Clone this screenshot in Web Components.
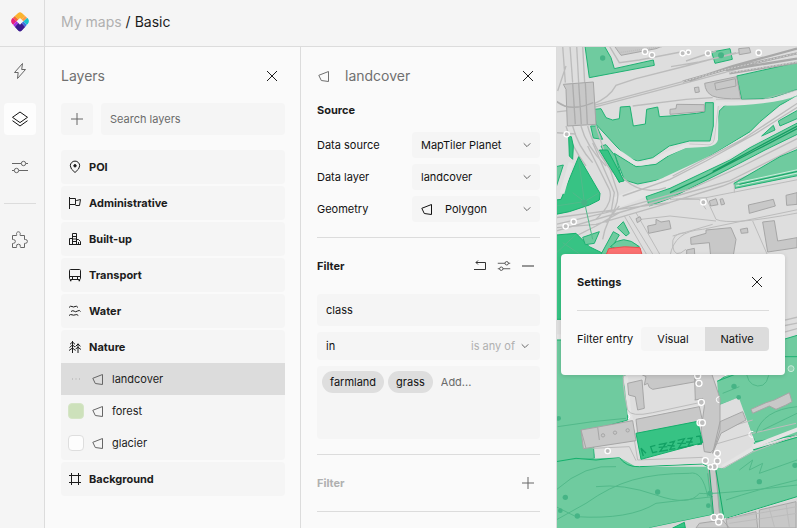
<!DOCTYPE html>
<html lang="en">
<head>
<meta charset="utf-8">
<title>Basic – My maps</title>
<meta name="viewport" content="width=device-width, initial-scale=1">
<style>
html,body{height:100%}
body{margin:0;overflow:hidden;font-family:Inter,"Liberation Sans",sans-serif;font-size:11px;line-height:16px;color:#1c1c1c;background:#fafafa}
</style>
</head>
<body>
<map-app></map-app>
<script>
const define = (name, html, setup) => {
  const t = document.createElement('template');
  t.innerHTML = `<style>*{box-sizing:border-box}button,input,select{font:inherit;color:inherit;border:0;background:none;margin:0;padding:0;border-radius:0}button{display:grid;place-items:center}h1,h2,h3,p,ul{margin:0;padding:0;font:inherit;list-style:none}</style>` + html;
  customElements.define(name, class extends HTMLElement {
    connectedCallback() {
      if (this.shadowRoot) return;
      this.attachShadow({mode: 'open'}).append(t.content.cloneNode(true));
      if (setup) setup(this, this.shadowRoot);
    }
  });
};

const icons = {
  logo: [20, `<clipPath id="c"><path d="M10 .3Q11.300.3 12.300 1.200L17.800 6.200Q20 9 17.800 12L12 18.600Q10 20.600 8 18.600L2.200 12Q0 9 2.200 6.200L7.700 1.200Q8.700.3 10 .3z"/></clipPath><g stroke="none" clip-path="url(#c)"><path fill="#fbb42f" d="M10 -1 15.400 4.100 11.700 7.600 10 5.900 8.300 7.600 4.600 4.100z"/><path fill="#f4683a" d="M4.600 4.100 8.300 7.600 6.600 9.300 2.900 5.700z"/><path fill="#e8207a" d="M2.900 5.700 6.600 9.300 3 12.900-1 9z"/><path fill="#a52be0" d="M6.600 9.300 8.300 11 4.600 15.200 3 12.900z"/><path fill="#3b1a8f" d="M8.300 11 10 12.700 11.700 11 15.500 15.200 10 21 4.600 15.200z"/><path fill="#3f6fe0" d="M11.700 11 13.400 9.300 17 12.900 15.400 15.200z"/><path fill="#16c3cc" d="M13.400 9.300 17.100 5.700 21 9 17 12.900z"/><path fill="#ff9c45" d="M11.700 7.600 15.400 4.100 17.100 5.700 13.400 9.300z"/></g>`],
  bolt: [18, `<path d="M11.500 1.500 3.500 10.500H7.200L6.500 16.500 14.500 7.500H10.700z"/>`],
  layers: [18, `<path d="M9 2 16.500 7.300 9 12.600 1.500 7.300z"/><path d="M1.500 10.700 9 16 16.500 10.700"/>`],
  sliders: [18, `<path d="M1 5.500H10.200M14.800 5.500H17M1 12.500H3.200M7.800 12.500H17"/><circle cx="12.500" cy="5.500" r="2.200"/><circle cx="5.500" cy="12.500" r="2.200"/>`],
  puzzle: [18, `<path d="M1.500 4.500H5.600Q6 3.900 5.600 3.300A1.900 1.900 0 1 1 9.200 3.300Q8.800 3.900 9.200 4.500H13.500V8.500Q14.100 8.900 14.500 8.500A1.800 1.800 0 1 1 14.500 12.300Q14 12 13.500 12.400V16.500H9.600Q9 16 9.300 15.500A1.900 1.900 0 1 0 5.600 15.500Q6 16 5.500 16.500H1.500V12.500Q2 12 2.500 12.300A1.800 1.800 0 1 0 2.500 8.600Q2 9 1.500 8.500z"/>`],
  plus: [14, `<path d="M7 1V13M1 7H13"/>`],
  minus: [14, `<path d="M1 7H13"/>`],
  close: [14, `<path d="M2 2 12 12M12 2 2 12"/>`],
  chevron: [8, `<path d="M.7 2.300 4 5.600 7.300 2.300"/>`],
  polygon: [14, `<path d="M1.800 6.300 11.500 2.500V12.500L4.300 11.500z"/>`],
  back: [14, `<path d="M5 1.500 3 3.500 5 5.500M3 3.500H12.500V10.500H1"/>`],
  pin: [14, `<path d="M7 12.500Q2.300 9 2.300 5.800A4.700 4.700 0 1 1 11.700 5.800Q11.700 9 7 12.500z"/><circle cx="7" cy="5.800" r="1.200" fill="currentColor"/>`],
  flag: [14, `<path d="M1.500 1V13M1.500 2.500H7.500V8.500H1.500M7.500 4.500H8.500L12.500 3.500 11.500 9.500H7.500"/>`],
  building: [14, `<path d="M1.500 12.500V6.500H4.500M1 12.500H13M4.500 12.500V1.500H8.500V12.500M8.500 7.500H10.500L12.500 9.500V12.500M4.500 4.500H8.500M4.500 7H8.500M4.500 9.500H8.500M10.500 10V12.500"/>`],
  bus: [14, `<rect x="1.500" y="1.500" width="11" height="10" rx="1"/><path d="M1.500 8.500H12.500M4.500 8.500V11.500M9.500 8.500V11.500"/><path d="M2.700 11.500V13.200M11.300 11.500V13.200" stroke-width="1.500"/>`],
  water: [14, `<path d="M1 3.500Q2.500 1.500 4 2.500T7 2.500 10 3.500M3 7.500Q5 6 6.200 7.200T9.500 7 12.500 7.500M1 11.500Q2.500 10 4 10.800T7.200 10.800 10.300 11.500"/>`],
  trees: [14, `<path d="M4.500 1V13M4.500 2 2 4.300M4.500 2 7 4.300M4.500 5 1.500 7.500M4.500 5 7 7M4.500 8 1 10.500M4.500 8 7.500 10.500M10 3.500V13M10 4 7.500 6.500M10 4 12.500 6.300M10 7.300 7.500 9M10 7.300 13 9.500"/>`],
  frame: [14, `<path d="M3.500 1V13M10.500 1V13M1 3.500H13M1 10.500H13"/>`],
  dots: [10, `<path d="M1 5H2M4.500 5H5.500M8 5H9"/>`]
};
define('app-icon', `<style>:host{display:block;flex:none}svg{display:block;fill:none;stroke:currentColor}</style>`, (el, root) => {
  const [box, art] = icons[el.getAttribute('name')];
  const s = el.getAttribute('size') || box;
  root.append(document.createRange().createContextualFragment(`<svg aria-hidden="true" width="${s}" height="${s}" viewBox="0 0 ${box} ${box}">${art}</svg>`));
});

define('tool-rail', `<style>
:host{display:block;background:#f5f5f5;color:#666;padding:8px 8px 8px 4px}
nav{display:flex;flex-direction:column;gap:16px;align-items:center}
button{width:32px;height:32px;border-radius:4px}
.on{background:#fdfdfd;color:#111}
hr{width:100%;border:0;border-top:1px solid #dcdcdc;margin:4px 0}
</style><nav aria-label="Tools">
<button aria-label="Quick styles"><app-icon name="bolt"></app-icon></button>
<button class="on" aria-label="Layers"><app-icon name="layers"></app-icon></button>
<button aria-label="Settings"><app-icon name="sliders"></app-icon></button>
<hr><button aria-label="Extensions"><app-icon name="puzzle"></app-icon></button></nav>`);

define('panel-head', `<style>
:host{display:flex;align-items:center;height:32px;padding-right:3px;color:#707070;font-size:14px;gap:14px}
h2{flex:1}button{width:18px;height:18px;color:#1c1c1c}
</style><slot name="icon"></slot><h2><slot></slot></h2><button aria-label="Close"><app-icon name="close"></app-icon></button>`);

define('layer-group', `<style>
:host{display:block;background:#f5f5f5;border-radius:4px;padding:1px 0}
button{display:flex;width:100%;height:32px;align-items:center;gap:7px;padding-left:7px;font-weight:700}
</style><button><span></span></button><slot></slot>`, (el, root) => {
  const icon = document.createElement('app-icon');
  icon.setAttribute('name', el.getAttribute('icon'));
  root.querySelector('button').prepend(icon);
  root.querySelector('span').textContent = el.getAttribute('label');
});

define('layer-item', `<style>
:host{display:block}
button{display:flex;width:100%;height:32px;align-items:center;padding-left:7px;gap:7px}
:host([selected]) button{background:#dcdcdc}
i{width:16px;height:16px;border-radius:4px;background:var(--swatch,none);border:1px solid var(--edge,transparent);display:grid;place-items:center}
app-icon{color:#666}i app-icon{color:#aaa}
</style><button><i></i><app-icon name="polygon"></app-icon><span><slot></slot></span></button>`, (el, root) => {
  if (el.hasAttribute('selected')) root.querySelector('i').innerHTML = '<app-icon name="dots"></app-icon>';
});

define('layers-panel', `<style>
:host{display:block;padding:13px 15px 16px 16px;background:#fafafa}
panel-head{padding-right:4px}
.find{display:grid;grid-template-columns:32px 1fr;gap:8px;margin:11px 0 15px}
.find button,.find input{height:32px;background:#f5f5f5;border-radius:4px}
.find button{color:#666}
.find input{width:100%;padding:0 9px}
input::placeholder{color:#6b6b6b;opacity:1}
.list{display:grid;gap:2px}
</style><panel-head>Layers</panel-head>
<div class="find"><button aria-label="Add layer"><app-icon name="plus"></app-icon></button><input type="search" aria-label="Search layers" placeholder="Search layers"></div>
<div class="list">
<layer-group icon="pin" label="POI"></layer-group>
<layer-group icon="flag" label="Administrative"></layer-group>
<layer-group icon="building" label="Built-up"></layer-group>
<layer-group icon="bus" label="Transport"></layer-group>
<layer-group icon="water" label="Water"></layer-group>
<layer-group icon="trees" label="Nature">
<layer-item selected>landcover</layer-item>
<layer-item style="--swatch:#cde1bb;--edge:#d5e5c6">forest</layer-item>
<layer-item style="--swatch:#fdfdfd;--edge:#dedede">glacier</layer-item>
</layer-group>
<layer-group icon="frame" label="Background"></layer-group>
</div>`);

define('field-select', `<style>
:host{display:grid;grid-template-columns:95px 1fr;align-items:center;color:#111}
.box{display:grid;align-items:center;background:#f5f5f5;border-radius:4px}
.box>*{grid-area:1/1}
select{appearance:none;width:100%;height:26px;padding:0 24px 0 9px}
app-icon{pointer-events:none}
.chev{justify-self:end;margin-right:9px;color:#666}
.shape{margin-left:8px}
:host([icon]) select{padding-left:33px}
</style><label for="s"></label><div class="box"><select id="s"><option></option></select><app-icon class="chev" name="chevron"></app-icon></div>`, (el, root) => {
  root.querySelector('label').textContent = el.getAttribute('label');
  root.querySelector('option').textContent = el.getAttribute('value');
  if (el.hasAttribute('icon')) root.querySelector('.box').insertAdjacentHTML('beforeend', '<app-icon class="shape" name="polygon"></app-icon>');
});

define('value-chip', `<style>:host{display:block}button{height:22px;padding:0 8px;border-radius:11px;background:#dedede;color:#111}</style><button><slot></slot></button>`);

define('detail-panel', `<style>
:host{display:block;padding:13px 16px 16px;background:#fafafa}
h3{font-weight:700}
.fields{display:grid;gap:6px;margin:14px 0 15px}
hr{border:0;border-top:1px solid #dcdcdc;margin:0}
.bar{display:flex;align-items:center;height:56px;gap:10px;padding-right:5px}
.bar h3{flex:1}
.bar button{width:14px;height:18px;color:#333}
.rule{display:grid;gap:6px;margin-bottom:15px;color:#111}
.rule input{width:100%}
.name{height:32px;background:#f5f5f5;border-radius:4px;padding:0 9px}
.op{display:grid;align-items:center;background:#f5f5f5;border-radius:4px}
.op>*{grid-area:1/1}
.op select{appearance:none;height:28px;width:100%;padding:0 80px 0 9px}
.hint{justify-self:end;display:flex;align-items:center;gap:6px;margin-right:11px;color:#b0b0b0;pointer-events:none}
.hint app-icon{color:#666}
.chips{display:flex;flex-wrap:wrap;align-content:flex-start;align-items:center;gap:4px;background:#f5f5f5;border-radius:4px;padding:5px;min-height:73px}
.chips input{flex:1;width:60px;height:22px;padding:0 4px}
.chips input::placeholder{color:#6b6b6b;opacity:1}
.off{color:#b0b0b0}
.off button{color:#666}
.top{padding-top:10px}
</style>
<panel-head><app-icon slot="icon" name="polygon"></app-icon>landcover</panel-head>
<h3 class="top">Source</h3>
<div class="fields">
<field-select label="Data source" value="MapTiler Planet"></field-select>
<field-select label="Data layer" value="landcover"></field-select>
<field-select label="Geometry" value="Polygon" icon></field-select>
</div><hr>
<div class="bar"><h3>Filter</h3><button aria-label="Reset filter"><app-icon name="back"></app-icon></button><button aria-label="Filter settings"><app-icon name="sliders" size="14"></app-icon></button><button aria-label="Remove filter"><app-icon name="minus"></app-icon></button></div>
<div class="rule">
<input class="name" aria-label="Property" value="class">
<div class="op"><select aria-label="Operator"><option>in</option></select><span class="hint">is any of <app-icon name="chevron"></app-icon></span></div>
<div class="chips"><value-chip>farmland</value-chip><value-chip>grass</value-chip><input aria-label="Add value" placeholder="Add..."></div>
</div><hr>
<div class="bar off"><h3>Filter</h3><button aria-label="Add filter"><app-icon name="plus"></app-icon></button></div><hr>`);

define('settings-dialog', `<style>
:host{display:block;background:#fafafa;border-radius:4px;padding:12px 16px 24px;box-shadow:0 1px 4px #0002}
header{display:flex;align-items:center;justify-content:space-between;height:32px;padding-right:5px}
h3{font-weight:700}
header button{width:14px;height:18px}
hr{border:0;border-top:1px solid #dcdcdc;margin:12px 0 16px}
.row{display:flex;align-items:center;justify-content:space-between;color:#111}
.seg{display:grid;grid-template-columns:64px 64px;border-radius:4px;overflow:hidden;background:#f5f5f5}
.seg button{height:24px}
.seg [aria-pressed=true]{background:#dcdcdc}
</style><header><h3>Settings</h3><button aria-label="Close settings"><app-icon name="close"></app-icon></button></header><hr>
<div class="row"><span id="l">Filter entry</span><div class="seg" role="group" aria-labelledby="l"><button aria-pressed="false">Visual</button><button aria-pressed="true">Native</button></div></div>`);

define('map-canvas', `<style>
:host{display:block;overflow:hidden;background:#dedede}
svg{display:block;width:100%;height:100%}
.g{fill:#6fcb9f;stroke:#1fb273;stroke-width:3}
.d{fill:#37c384;stroke:#14b06c;stroke-width:3}
.b{fill:#c8c8c8;stroke:#a6a6a6;stroke-width:3}
.l{fill:none;stroke:#bcbcbc;stroke-width:4}
.w{fill:none;stroke:#e4e4e4}
.t{fill:none;stroke:#52b98a;stroke-width:3}
.c{fill:#bebebe;stroke:#fff;stroke-width:4}
.p{fill:#46b486;stroke:none}
</style>
<svg viewBox="3 3 720 1443" preserveAspectRatio="xMinYMin slice" role="img" aria-label="Map of landcover areas">
<rect width="730" height="1450" fill="#dedede"/>
<!-- parks north of the junction -->
<path class="g" d="M87 0 100 95 295 58 292 42 175 68 165 35 145 0z"/>
<path class="g" d="M115 190 135 188 150 215 170 222 190 218 193 183 222 181 232 240 268 234 272 190 305 183 310 212 342 210 422 202 446 198 448 170 472 170 472 240 462 285 400 285 340 300 290 335 245 345 215 335 180 300 120 235z"/>
<path class="g" d="M175 322 205 402 245 414 330 397 442 342 492 312 582 257 612 227 672 177 730 147 640 166 507 178 490 195 478 280 460 300 400 300 340 328 300 355 240 362z"/>
<path class="g" d="M542 90 730 48V128L642 157 557 160zM467 18 522 8 529 40 477 52z"/>
<path class="g" d="M104 240 122 240 140 280 112 276zM135 300 150 296 178 330 198 400 190 410 165 360z"/>
<path class="l" d="M20 0 28 110M42 0 50 110M62 0 68 110M80 0 86 110M5 135 30 60M30 240Q45 300 90 360M50 240Q65 300 110 350M75 240Q90 300 150 360M95 240Q110 300 170 380"/>
<path class="l" d="M0 165 30 182 110 175Q160 155 180 118L240 98 390 60 540 20M0 198 110 185 280 140 430 100 560 65M113 178 380 107M160 0 190 50 250 42 390 15M390 45 480 15M230 180 390 160 470 155M0 260 60 264M345 62 430 48 550 20"/>
<path class="b" d="M175 0 195 28 300 8 320 0z"/>
<path class="l" stroke-dasharray="3 3" d="M190 20 330 0"/>
<path class="b" d="M22 115 112 108 120 235 34 240 30 130z"/>
<path d="M50 112 58 235M68 111 76 235M88 110 94 235M0 165Q40 200 112 170" fill="none" stroke="#adadad" stroke-width="4"/>
<path d="M380 107 510 70 723 22M510 72 723 38M520 82 723 50M400 104 530 60 723 8" fill="none" stroke="#a8a8a8" stroke-width="7"/>
<path d="M380 107 510 70 723 22M510 82 723 48" fill="none" stroke="#e0e0e0" stroke-width="2" stroke-dasharray="6 4"/>
<path class="b" d="M446 112 542 92 554 158Q495 160 470 150 448 140 446 112zM476 112 538 98 540 120 480 132zM342 190 360 188 362 175 445 176 445 196 342 205zM415 125 428 123 430 138 418 140zM548 8 580 5 584 20 550 26z"/>
<path class="w" stroke-width="12" d="M478 172Q540 176 620 166T730 138M482 175 480 280Q478 292 455 296L390 300 330 325Q270 362 235 350L180 312"/>
<path class="l" style="stroke-width:2" d="M480 160H620L730 130M487 180 475 280Q470 300 450 296L400 294"/>
<!-- railway corridor -->
<path class="w" stroke-width="34" d="M730 165Q660 205 600 270L470 345 330 410 180 470"/>
<path class="g" fill="#5cc795" d="M270 452 342 427 522 342 582 305 730 228V262L627 312 522 367 342 457 280 480z"/>
<path class="t" style="stroke:#169c62;stroke-width:4" d="M342 440 450 390 600 312 730 245M470 377 600 306 730 237"/>
<path class="g" d="M667 225 730 190V215L672 240zM617 270 652 238 657 252z"/>
<path class="l" d="M730 180 600 262 450 345 342 400 200 450M730 168 560 280 350 390M730 275 560 360 400 430 150 500 0 535M730 300 520 405 360 450 0 555M730 325 500 420 340 470 0 515M0 545 120 535 342 470M0 600 120 540 190 500M190 480Q150 520 140 580M120 240 185 440Q190 480 150 530M95 300 160 430Q175 470 120 520M110 290 175 440 165 500M135 330 205 400Q260 450 330 425"/>
<path class="g" d="M730 308 672 332 534 412 537 427 730 388z"/>
<path d="M540 420 730 380M545 410 730 370" fill="none" stroke="#dff3e8" stroke-width="2.500"/>
<path d="M550 415 730 375" fill="none" stroke="#10a565" stroke-width="3"/>
<!-- western parks -->
<path class="d" d="M68 332 132 442 130 462 100 477 40 497 0 505V462L15 460zM0 567 60 562 100 602 145 624V820H0zM38 272H46L52 300 50 340 40 330zM130 312H155L204 405 190 408z"/>
<path class="g" d="M0 362 22 357 0 425zM80 574 130 557 115 592 88 596zM172 557 190 567 155 625H135zM184 545 202 527 220 562 210 570z"/>
<path class="w" stroke-width="14" d="M45 350 18 442"/><path class="t" d="M68 340 85 467 110 580M0 480 85 467 130 440M50 440 85 467M0 622 60 565M20 590 80 630"/>
<circle class="p" cx="85" cy="470" r="9"/><circle class="p" cx="140" cy="36" r="8"/><circle class="p" cx="495" cy="28" r="9"/>
<path class="g" d="M163 602Q200 560 250 602L205 614z"/>
<path d="M158 608Q205 598 252 605L262 640H145z" fill="#fa7070" stroke="#e94f4f" stroke-width="3"/>
<!-- eastern blocks -->
<path class="l" style="stroke-width:3" d="M205 510 280 640M220 510 300 640M240 500 320 640M342 460 450 455 480 520Q520 540 730 500M450 455 730 400M255 520 342 510 480 525M350 570 470 535M342 630Q355 555 440 550L730 490M590 525 640 640M535 415V440M390 560Q345 560 350 600T390 610M360 460H430L450 490"/>
<path class="b" d="M275 540 300 535 300 520 315 528 340 524 345 548 278 562zM240 518 252 512 256 522 244 530zM460 465 480 458 486 476 464 480zM492 460 500 458 506 474 496 477zM577 477 652 460 658 480 580 502zM690 448 723 440V475L692 478zM404 575 450 562 450 552 525 545 540 580 530 640H465L460 590 405 595zM553 550 574 546 576 560 556 562zM620 528 655 524 665 585 723 575V605L635 618zM392 612 415 607 417 640H392z"/>
<g class="c"><circle cx="267" cy="17" r="8"/><circle cx="288" cy="27" r="8"/><circle cx="380" cy="22" r="8"/><circle cx="397" cy="19" r="7"/><circle cx="456" cy="22" r="8"/><circle cx="608" cy="20" r="8"/><circle cx="32" cy="265" r="8"/><circle cx="442" cy="469" r="8"/><circle cx="29" cy="541" r="8"/><circle cx="53" cy="527" r="8"/></g>
<!-- southern park and castle quarter -->
<path class="l" d="M680 824 730 812M680 840 730 830M680 860 730 846"/>
<path class="g" d="M0 884H200L215 1100 0 1160zM650 890 730 866V1160L600 1200 480 1010z"/>
<path d="M0 872H40" class="w" stroke-width="14"/>
<g transform="translate(0 972)">
<path class="g" d="M0-90H205L215 150 110 180 115 265 0 275zM480 35 545 10 590-40H730V195L597 215 545 85 492 105z"/>
<path fill="#6fcb9f" d="M0 270 190 262 240 290H460L500 295 590 240 723 200V380L505 445 400 455 280 474H0z"/>
<path class="d" style="fill:none" d="M0 275 60 265 120 270 190 262Q210 292 250 290L440 282 460 292M500 295 590 240 723 202M510 445 723 380M280 474 470 434"/>
<path d="M280 474 470 434 510 446 723 384V480H280z" fill="#d6d6d6"/>
<path fill="#dedede" d="M200 20 240 0H480L490 105 548 82 597 215 500 292 440 280 240 288 190 262 118 265 115 235 230 150z"/>
<path class="w" stroke-width="12" d="M210 20 220 130 235 180M590 230 730 176M500 290 590 236M240 150 430 112"/>
<path class="l" style="stroke-width:3" d="M205 10Q195 30 215 120 225 142 290 128L430 98M225 150 245 270 440 262M110 235 220 230 240 272M470 225 590 190 720 160M495 178 590 150M500 295 590 246 723 195M440 85 415 90"/>
<path class="b" d="M215 40 258 30 265 115 245 120 238 80 218 75zM265 45 275 40 280 52 290 58 420 35 412 5 240 5 270 20zM415 5H465L492 85V180L475 235 465 248 445 245 435 180 445 110 440 85 418 90zM492 155 560 125 570 150 495 190 470 250zM240 148 430 110 440 155 245 190zM75 180 120 172 230 152 240 212 82 236zM75 180 90 235M125 172 130 210M585 118 630 98 655 90 700 68 708 95 690 105 660 118 640 108 590 130zM457 292 478 290 492 450 472 440z"/>
<path class="d" d="M240 190 425 154 440 218 255 268z"/>
<path d="M262 258 255 235 270 250M298 226 284 230 290 248 304 245M308 224 330 220 312 244 336 240M308 232 334 230M340 218 355 214 342 238 358 236M334 226 356 228M365 211 385 206 368 234 392 230M364 220 390 220M394 206 408 204 396 228 412 225M390 216 410 216M420 200 432 198 436 222 424 224" fill="none" stroke="#12a164" stroke-width="4"/>
<path class="t" d="M5 170 110 155 210 145M0 360Q90 280 180 290M0 450 90 400Q160 350 230 330T400 310Q440 300 455 380M120 350Q200 340 300 375T430 370Q470 375 723 345M0 410 60 440Q220 450 300 400L470 380M510 390Q600 360 723 330M550 300 590 270 580 300 620 280 610 310 723 270M570-10Q570 45 605 48T640-10M500 70 550 50M600 190Q620 120 723 110M620 180 723 130M455 310 470 440"/>
<path class="t" style="stroke:#14a868" d="M460 295 473 440M478 290 504 445"/>
<path class="b" d="M430 460 500 450 520 474H420zM510 448 600 425 605 474H515zM610 420 720 395V474H610z"/>
<path class="d" d="M350 474 385 457 388 474z"/>
<path class="l" style="stroke-width:3" d="M520 445 723 410M520 460 723 430M640 415 655 470M690 400 700 470"/>
<g class="p"><circle cx="8" cy="145" r="7"/><circle cx="28" cy="382" r="8"/><circle cx="64" cy="438" r="8"/><circle cx="13" cy="422" r="7"/><circle cx="305" cy="366" r="8"/><circle cx="610" cy="335" r="8"/><circle cx="534" cy="49" r="8"/><circle cx="462" cy="370" r="8"/><circle cx="717" cy="286" r="8"/><circle cx="457" cy="407" r="7"/><circle cx="548" cy="82" r="7"/></g>
<g class="c"><circle cx="425" cy="17" r="9"/><circle cx="429" cy="40" r="9"/><circle cx="436" cy="97" r="9"/><circle cx="432" cy="158" r="9"/><circle cx="439" cy="158" r="9"/><circle cx="155" cy="243" r="8"/><circle cx="484" cy="250" r="9"/><circle cx="448" cy="272" r="9"/><circle cx="484" cy="273" r="9"/><circle cx="475" cy="290" r="9"/><circle cx="463" cy="291" r="7"/><circle cx="474" cy="442" r="9"/><circle cx="493" cy="441" r="9"/><circle cx="488" cy="456" r="9"/></g>
<g fill="none" stroke="#fff" stroke-width="3"><path d="M490 80A9 9 0 0 0 490 98M592 185A9 9 0 1 0 592 201M216 132A8 8 0 0 1 216 147M505 18 520 12"/></g>
<g class="b"><circle cx="141" cy="196" r="5"/><circle cx="177" cy="188" r="5"/><circle cx="215" cy="181" r="5"/></g>
</g>
<circle cx="705" cy="968" r="9" fill="#8fd1b0" stroke="#c6ead8" stroke-width="3"/>
</svg>`);

define('map-app', `<style>
:host{display:grid;grid-template-columns:44px 255px 255px minmax(0,1fr);grid-template-rows:46px minmax(0,1fr);gap:1px;height:100vh;background:#dcdcdc}
.logo{display:grid;place-items:center;padding-right:4px;padding-bottom:2px;background:#f5f5f5}
.crumb{grid-column:2/-1;display:flex;align-items:center;gap:4px;padding:0 16px 2px;background:#f5f5f5;font-size:14px}
a{color:#b0b0b0;text-decoration:none}h1{font:inherit}
layers-panel,detail-panel{overflow:hidden}
main{display:grid;position:relative;min-width:0;min-height:0}
map-canvas{grid-area:1/1;min-height:0}
settings-dialog{position:absolute;left:4px;top:207px;width:224px}
</style>
<a class="logo" href="#" aria-label="Home"><app-icon name="logo"></app-icon></a>
<nav class="crumb" aria-label="Breadcrumb"><a href="#">My maps</a><span>/</span><h1>Basic</h1></nav>
<tool-rail></tool-rail><layers-panel></layers-panel><detail-panel></detail-panel>
<main><map-canvas></map-canvas><settings-dialog></settings-dialog></main>`);
</script>
</body>
</html>
